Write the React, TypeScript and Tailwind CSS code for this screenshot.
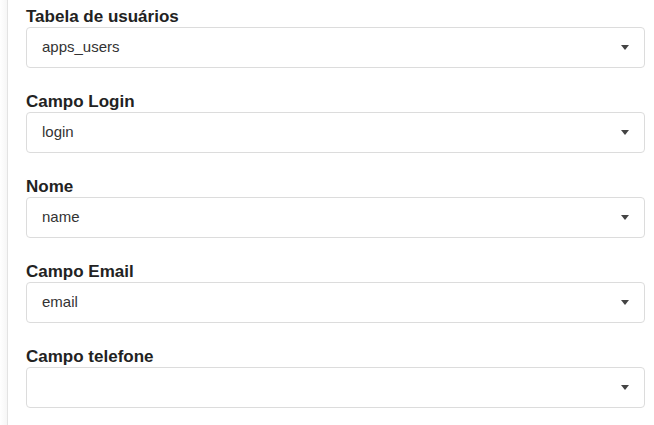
const fields = [
  { label: "Tabela de usuários", value: "apps_users" },
  { label: "Campo Login", value: "login" },
  { label: "Nome", value: "name" },
  { label: "Campo Email", value: "email" },
  { label: "Campo telefone", value: "" },
];

function SelectBox({ value }: { value: string }) {
  return (
    <div className="flex h-[41px] items-center justify-between rounded-[4px] border border-[#dcdcdc] bg-white pl-[15px] pr-[15px]">
      <span className="text-[15px] text-[#333]">{value}</span>
      <span className="h-0 w-0 border-x-[4px] border-t-[5px] border-x-transparent border-t-[#444]" />
    </div>
  );
}

export default function App() {
  return (
    <div
      className="flex h-[425px] w-[654px] bg-white"
      style={{ fontFamily: '"Liberation Sans", Arial, sans-serif' }}
    >
      <div className="w-[8px] shrink-0 border-r border-[#e3e3e3] bg-gradient-to-r from-white to-[#f6f6f6]" />
      <div className="flex flex-1 flex-col gap-[24px] pl-[18px] pr-[9px] pt-[7px]">
        {fields.map((f) => (
          <div key={f.label}>
            <div className="text-[17px] font-bold leading-[20px] text-[#222]">{f.label}</div>
            <SelectBox value={f.value} />
          </div>
        ))}
      </div>
    </div>
  );
}
